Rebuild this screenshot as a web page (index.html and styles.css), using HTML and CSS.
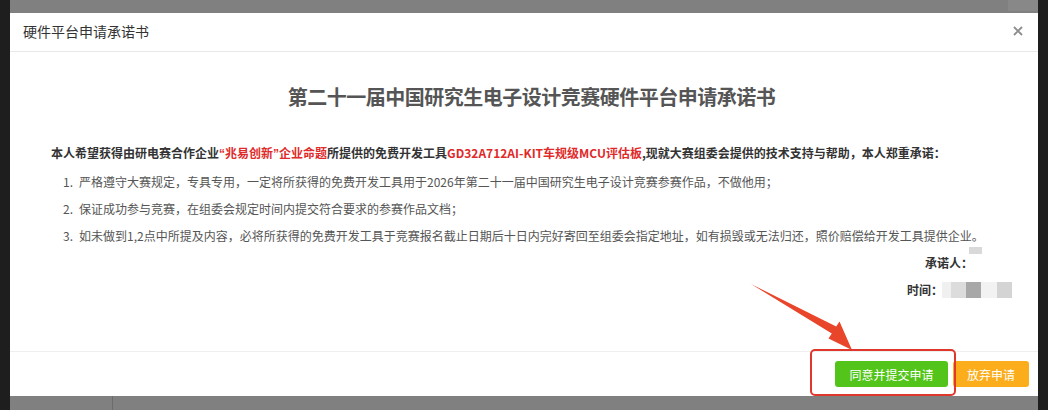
FILE: index.html
```html
<!DOCTYPE html>
<html lang="zh-CN">
<head>
    <meta charset="UTF-8">
    <meta name="viewport" content="width=device-width, initial-scale=1.0">
    <link rel="stylesheet" href="styles.css">
    <title>硬件平台申请承诺书</title>
</head>
<body>
    <div class="screen">
        <div class="side"></div>

        <div class="center">
            <div class="top-band"><span class="top-tab"></span></div>

            <div class="dialog">
                <div class="dialog-header">
                    <span class="dialog-title">硬件平台申请承诺书</span>
                    <span class="close">
                        <svg width="10" height="10" viewBox="0 0 10 10">
                            <path d="M1 1 L9 9 M9 1 L1 9" stroke="#8c8c8c" stroke-width="1.8" fill="none"/>
                        </svg>
                    </span>
                </div>

                <div class="dialog-body">
                    <h2>第二十一届中国研究生电子设计竞赛硬件平台申请承诺书</h2>
                    <p class="intro">本人希望获得由研电赛合作企业<span class="red"><span class="q">“</span>兆易创新<span class="q">”</span>企业命题</span>所提供的免费开发工具<span class="red">GD32A712AI-KIT车规级MCU评估板</span>,现就大赛组委会提供的技术支持与帮助，本人郑重承诺：</p>
                    <div class="items">
                        <div class="item"><span class="num">1.</span>严格遵守大赛规定，专具专用，一定将所获得的免费开发工具用于2026年第二十一届中国研究生电子设计竞赛参赛作品，不做他用；</div>
                        <div class="item"><span class="num">2.</span>保证成功参与竞赛，在组委会规定时间内提交符合要求的参赛作品文档；</div>
                        <div class="item"><span class="num">3.</span>如未做到1,2点中所提及内容，必将所获得的免费开发工具于竞赛报名截止日期后十日内完好寄回至组委会指定地址，如有损毁或无法归还，照价赔偿给开发工具提供企业。</div>
                    </div>
                    <div class="sign-line">
                        <span class="label">承诺人：</span>
                        <span class="sign-value"></span>
                    </div>
                    <div class="time-line">
                        <span class="label">时间：</span>
                        <span class="blur">
                            <i class="b1"></i><i class="b2"></i><i class="b3"></i><i class="b4"></i><i class="b5"></i>
                        </span>
                    </div>
                </div>

                <div class="dialog-footer">
                    <button class="btn btn-agree">同意并提交申请</button>
                    <button class="btn btn-giveup">放弃申请</button>
                </div>
            </div>

            <div class="bottom-band"></div>
        </div>

        <div class="side"></div>

        <!-- annotation drawn over the screenshot -->
        <svg class="arrow" width="1048" height="410" viewBox="0 0 1048 410">
            <polygon points="751,284 836.2,326.6 839.5,321.6 852,350 828.5,338.4 831.8,333.4" fill="#e8452b"/>
        </svg>
        <div class="mark-box"></div>
    </div>
</body>
</html>
```

FILE: styles.css
```css
body {
    margin: 0;
    padding: 0;
    font-family: "Noto Sans CJK SC", "Microsoft YaHei", sans-serif;
    background-color: #1e1e1e;
    color: #333;
}

.screen {
    position: relative;
    width: 1048px;
    height: 410px;
    display: grid;
    grid-template-columns: 10px 1fr 10px;
    overflow: hidden;
}

.side {
    background-color: #1e1e1e;
}

.center {
    display: flex;
    flex-direction: column;
}

.top-band {
    height: 13px;
    background-color: #808080;
    display: flex;
    justify-content: flex-end;
}

.top-tab {
    width: 30px;
    height: 11px;
    background-color: #888;
}

.bottom-band {
    height: 14px;
    background-color: #808080;
    border-left: 1px solid #808080;
    background-image: linear-gradient(to right, transparent 101px, #6c6c6c 101px, #6c6c6c 102px, transparent 102px);
}

.dialog {
    height: 383px;
    background-color: #fff;
    display: flex;
    flex-direction: column;
}

.dialog-header {
    height: 38px;
    border-bottom: 1px solid #e9e9e9;
    display: flex;
    align-items: center;
    justify-content: space-between;
    padding: 0 15px 0 13px;
}

.dialog-title {
    font-size: 14px;
    color: #333;
    line-height: 20px;
    margin-top: -2px;
}

.close {
    display: flex;
    margin-top: -3px;
}

.dialog-body {
    height: 299px;
    box-sizing: border-box;
    padding: 30px 26px 0 41px;
}

.dialog-body h2 {
    margin: 0;
    font-size: 20px;
    line-height: 30px;
    font-weight: bold;
    letter-spacing: -0.5px;
    color: #555;
    text-align: center;
}

.intro {
    margin: 27px 0 0;
    font-size: 12px;
    line-height: 27px;
    font-weight: bold;
    color: #333;
    white-space: nowrap;
}

.red {
    color: #e02a2a;
}

.q {
    font-family: "Liberation Sans", Arial, sans-serif;
}

.items {
    padding-left: 12px;
}

.item {
    font-size: 12px;
    line-height: 27px;
    color: #555;
    white-space: nowrap;
}

.num {
    display: inline-block;
    width: 16px;
}

.sign-line,
.time-line {
    display: flex;
    justify-content: flex-end;
    align-items: center;
    height: 27px;
    font-size: 12px;
    font-weight: bold;
    color: #333;
}

.sign-line {
    padding-right: 30px;
}

.sign-value {
    width: 13px;
    height: 7px;
    background-color: #d9d9d9;
    align-self: flex-start;
    margin-top: -2px;
    margin-left: -4px;
}

.blur {
    display: flex;
    height: 16px;
    margin-left: -1px;
}

.blur i {
    display: block;
    height: 16px;
}

.b1 { width: 9px; background-color: #f0f0f0; }
.b2 { width: 15px; background-color: #dcdcdc; }
.b3 { width: 15px; background-color: #a8a8a8; }
.b4 { width: 16px; background-color: #f2f2f2; }
.b5 { width: 15px; background-color: #d4d4d4; }

.dialog-footer {
    border-top: 1px solid #efefef;
    padding: 9px 9px 9px 0;
    display: flex;
    justify-content: flex-end;
    gap: 5px;
}

.btn {
    height: 26px;
    border: none;
    border-radius: 3px;
    color: #fff;
    font-family: "Noto Sans CJK SC", "Microsoft YaHei", sans-serif;
    font-size: 12px;
    padding: 0 14px;
    cursor: pointer;
}

.btn-agree {
    width: 113px;
    background-color: #52c41a;
}

.btn-giveup {
    width: 76px;
    background-color: #fbad1c;
}

.arrow {
    position: absolute;
    left: 0;
    top: 0;
    pointer-events: none;
}

.mark-box {
    position: absolute;
    left: 810px;
    top: 349px;
    width: 142px;
    height: 43px;
    border: 2px solid #e0372c;
    border-radius: 5px;
}
```
